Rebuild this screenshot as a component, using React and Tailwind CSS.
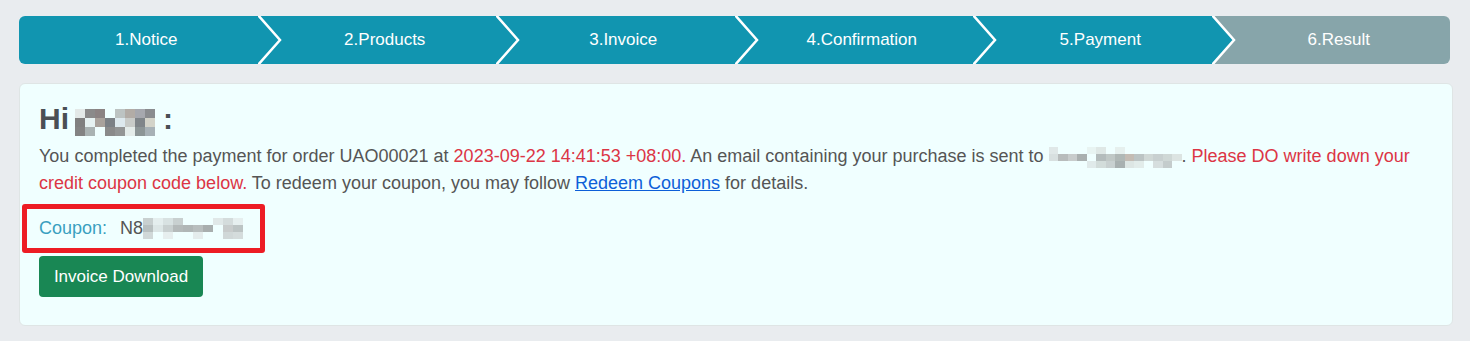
import React from 'react';

const steps = ['1.Notice', '2.Products', '3.Invoice', '4.Confirmation', '5.Payment', '6.Result'];

// pixelated name/email blocks
const Mosaic = ({ cols, w, h, shades }) => (
  <span className="inline-grid align-middle" style={{ gridTemplateColumns: `repeat(${cols}, ${w}px)`, gridAutoRows: `${h}px` }}>
    {shades.map((c, i) => (
      <span key={i} style={{ background: c }} />
    ))}
  </span>
);

const nameShades = [
  '#e3e9e8', '#8a8a8a', '#8b8383', '#f0ffff', '#bcc3c2', '#b2aca6', '#a6a8ae', '#8a8c8f',
  '#808080', '#e6f2f2', '#a9a29c', '#7b8085', '#dde9ee', '#c8cbc8', '#7f8589', '#d3d3c9',
  '#838383', '#aab3b3', '#f0ffff', '#8a8a8a', '#939595', '#e4ecea', '#8c9596', '#a7b1b6',
];

const emailShades = [
  '#e0e8e8', '#f0ffff', '#f0ffff', '#f0ffff', '#e8f4f2', '#dfe8e6', '#f0ffff', '#e6f0ee', '#f0ffff', '#f0ffff', '#f0ffff', '#f0ffff', '#f0ffff', '#f0ffff',
  '#d8e0e0', '#b8bcbc', '#c8cccc', '#aab0b0', '#f0ffff', '#b4bcbc', '#c0c8c6', '#b0b8b6', '#c4bcb4', '#bcc4c4', '#d0d8d6', '#c8d0d0', '#cfd8d6', '#dce4e2',
  '#f0ffff', '#f0ffff', '#f0ffff', '#f0ffff', '#e0eaea', '#d2dcda', '#c8d0d0', '#a8b0b0', '#dde6e4', '#e2ecea', '#f0ffff', '#d6dede', '#c4cccc', '#f0ffff',
];

const couponShades = [
  '#c8d0d0', '#e4eeee', '#d8e2e2', '#c8d0d0', '#f0ffff', '#f0ffff', '#f0ffff', '#e0e8e8', '#d4dcdc', '#e6efef',
  '#b8c0c0', '#dce6e6', '#c8d0d0', '#b4baba', '#b0b6b6', '#b8bebe', '#a8aeae', '#f0ffff', '#c8cccc', '#bcc4c4',
  '#d0d8d8', '#f0ffff', '#e6eeee', '#f0ffff', '#f0ffff', '#e4ecec', '#f0ffff', '#f0ffff', '#d0d8d8', '#d4dcdc',
];

const Stepper = () => (
  <div className="flex h-12 rounded-md overflow-hidden">
    {steps.map((s, i) => {
      const last = i === steps.length - 1;
      const color = last ? '#87a5aa' : '#1195b0';
      return (
        <div key={s} className="relative flex-1 flex items-center justify-center pl-4 text-white text-[17px]" style={{ background: color }}>
          {s}
          {!last && (
            <svg className="absolute top-0 -right-[24px] z-10" width="24" height="48" viewBox="0 0 24 48">
              <polygon points="0,0 22,24 0,48" fill={color} />
              <polyline points="0,-1 22,24 0,49" fill="none" stroke="#ffffff" strokeWidth="2.5" />
            </svg>
          )}
        </div>
      );
    })}
  </div>
);

const App = () => {
  return (
    <div className="min-h-screen bg-[#e9ecef] pt-4 pl-[19px] pr-[17px] font-['Liberation_Sans',Arial,sans-serif]">
      <div className="w-[1431px]">
        <Stepper />
      </div>

      {/* Result card */}
      <div className="mt-[19px] w-[1434px] bg-[#f0ffff] border border-[#dfe5e5] rounded-md pl-[19px] pr-4 pt-[16px] pb-[28px]">
        <h3 className="flex items-center text-[30px] font-bold text-[#4a4f54] leading-[1.2] mb-[5px]">
          Hi
          <span className="ml-[6px] mt-[2px]">
            <Mosaic cols={8} w={10} h={9} shades={nameShades} />
          </span>
          <span className="ml-[8px]">:</span>
        </h3>

        <p className="text-[18px] text-[#555555] leading-[27px]">
          You completed the payment for order UAO00021 at{' '}
          <span className="text-[#dc3545]">2023-09-22 14:41:53 +08:00.</span> An email containing your purchase is sent to{' '}
          <Mosaic cols={14} w={9.5} h={7} shades={emailShades} />.{' '}
          <span className="text-[#dc3545]">Please DO write down your credit coupon code below.</span> To redeem your coupon, you may follow{' '}
          <a href="#" className="text-[#0d5fd8] underline">Redeem Coupons</a> for details.
        </p>

        <div className="mt-[7px] -ml-[17px] w-[243px] h-[49px] border-[5px] border-[#ed1c24] rounded-[3px] flex items-center pl-3 text-[18px]">
          <span className="text-[#3a9fbf]">Coupon:</span>
          <span className="ml-[13px] text-[#555555]">N8</span>
          <Mosaic cols={10} w={10} h={7} shades={couponShades} />
        </div>

        <button className="mt-[3px] h-[41px] w-[164px] rounded bg-[#198754] text-white text-[17px]">
          Invoice Download
        </button>
      </div>
    </div>
  );
};

export default App;
